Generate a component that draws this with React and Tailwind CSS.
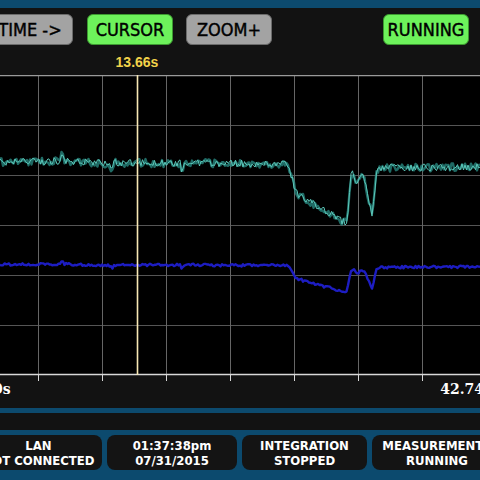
import { useMemo } from "react";

const W = 480;
const H = 300;
const GRID_X = [38, 102, 166, 230, 294, 358, 422];
const GRID_Y = [50, 100, 150, 200, 250];
const CURSOR_X = 137;

// cyan trace shape, in page coordinates (y from top of page)
const KEYS = [
  [0, 162], [60, 161], [62, 154], [64, 161], [110, 164], [112, 171], [114, 163],
  [180, 163], [182, 171], [184, 163], [288, 164], [292, 178], [296, 193],
  [320, 208], [344, 222], [347, 222], [351, 176], [353, 172], [357, 184],
  [361, 172], [364, 176], [372, 216], [377, 170], [380, 168], [480, 167],
];

const rng = (seed) => () => {
  seed |= 0;
  seed = (seed + 0x6d2b79f5) | 0;
  let t = Math.imul(seed ^ (seed >>> 15), 1 | seed);
  t = (t + Math.imul(t ^ (t >>> 7), 61 | t)) ^ t;
  return ((t ^ (t >>> 14)) >>> 0) / 4294967296;
};

const shape = (x) => {
  for (let i = 1; i < KEYS.length; i++) {
    const [x1, y1] = KEYS[i];
    const [x0, y0] = KEYS[i - 1];
    if (x <= x1) return y0 + ((x - x0) / (x1 - x0)) * (y1 - y0);
  }
  return 167;
};

const buildPath = (seed, amp, map) => {
  const r = rng(seed);
  let d = "";
  for (let x = 0; x <= W; x += 1.5) {
    const y = map(shape(x)) + (r() - 0.5) * amp - 75;
    d += `${d ? "L" : "M"}${x.toFixed(1)} ${y.toFixed(1)}`;
  }
  return d;
};

const TopButton = ({ label, on }) => (
  <div
    className={`w-[86px] h-[31px] shrink-0 rounded-[6px] border-[1.5px] flex items-center justify-center text-[18px] text-black leading-none [-webkit-text-stroke:0.4px_black] ${
      on ? "bg-[#6df25b] border-[#3c9a30]" : "bg-[#a3a3a3] border-[#6b6b6b]"
    }`}
  >
    {label}
  </div>
);

const StatusBox = ({ w, top, bottom, className = "" }) => (
  <div
    className={`h-[35px] shrink-0 rounded-[8px] bg-[#141414] flex flex-col items-center justify-center text-white font-bold text-[13px] leading-[15px] whitespace-nowrap ${w} ${className}`}
  >
    <span>{top}</span>
    <span>{bottom}</span>
  </div>
);

export default function App() {
  const traces = useMemo(
    () => ({
      cyanA: buildPath(7, 8, (y) => y),
      cyanB: buildPath(19, 7, (y) => y),
      blue: buildPath(31, 2.5, (y) => 265 + (y - 163) * 0.45),
    }),
    []
  );

  return (
    <div
      className="w-[480px] h-[480px] overflow-hidden bg-[#121212] flex flex-col"
      style={{ fontFamily: '"DejaVu Sans Condensed", "DejaVu Sans", sans-serif' }}
    >
      {/* top strip */}
      <div className="h-[8px] bg-[#0c4a6e] shrink-0" />

      {/* button header */}
      <div className="relative h-[67px] shrink-0">
        <div className="flex items-center pt-[6px] ml-[-13px]">
          <TopButton label="TIME ->" />
          <div className="w-[14px]" />
          <TopButton label="CURSOR" on />
          <div className="w-[13px]" />
          <TopButton label="ZOOM+" />
          <div className="flex-1" />
          <TopButton label="RUNNING" on />
          <div className="w-[11px] shrink-0" />
        </div>
        <div
          className="absolute top-[47px] -translate-x-1/2 text-[14px] leading-none font-bold text-[#f2d24a]"
          style={{ left: CURSOR_X, fontFamily: '"Liberation Sans", sans-serif' }}
        >
          13.66s
        </div>
      </div>

      {/* chart */}
      <svg width={W} height={306} className="block shrink-0" viewBox={`0 0 ${W} 306`}>
        <rect x="0" y="0" width={W} height={H} fill="#000" />
        <rect x="0" y={H} width={W} height={6} fill="#121212" />
        {GRID_Y.map((y) => (
          <line key={y} x1="0" x2={W} y1={y + 0.5} y2={y + 0.5} stroke="#555" strokeWidth="1" />
        ))}
        {GRID_X.map((x) => (
          <line key={x} x1={x + 0.5} x2={x + 0.5} y1="0" y2={H + 6} stroke="#666" strokeWidth="1" />
        ))}
        {GRID_X.map((x) => (
          <line key={`t${x}`} x1={x + 0.5} x2={x + 0.5} y1={H} y2={H + 6} stroke="#d8d8d8" strokeWidth="1" />
        ))}
        <line x1="0" x2={W} y1="0.5" y2="0.5" stroke="#9a9a9a" strokeWidth="1.5" />
        <line x1="0" x2={W} y1={H - 0.5} y2={H - 0.5} stroke="#d8d8d8" strokeWidth="1.5" />

        <path d={traces.blue} fill="none" stroke="#1d1dc2" strokeWidth="2.4" strokeLinejoin="round" />
        <path d={traces.cyanA} fill="none" stroke="#2a8e86" strokeWidth="2.4" strokeOpacity="0.75" strokeLinejoin="round" />
        <path d={traces.cyanB} fill="none" stroke="#5cc8ba" strokeWidth="1" strokeLinejoin="round" />

        <line x1={CURSOR_X + 0.5} x2={CURSOR_X + 0.5} y1="0" y2={H} stroke="#f7e7b4" strokeWidth="1.6" />
      </svg>

      {/* axis labels */}
      <div
        className="h-[27px] shrink-0 flex items-start text-white font-bold text-[14px] leading-none pt-[1px]"
        style={{ fontFamily: '"DejaVu Serif", serif' }}
      >
        <span className="ml-[-7px]">0s</span>
        <div className="flex-1" />
        <span className="mr-[-12px]">42.74s</span>
      </div>

      <div className="h-[5px] bg-[#0c4a6e] shrink-0" />
      <div className="h-[17px] bg-[#121212] shrink-0" />

      {/* status row */}
      <div className="flex-1 bg-[#0c4a6e] flex items-start pt-[5px] gap-[5px]">
        <StatusBox w="w-[127px]" className="ml-[-25px]" top="LAN" bottom="NOT CONNECTED" />
        <StatusBox w="w-[130px]" top="01:37:38pm" bottom="07/31/2015" />
        <StatusBox w="w-[125px]" top="INTEGRATION" bottom="STOPPED" />
        <StatusBox w="w-[130px]" top="MEASUREMENTS" bottom="RUNNING" />
      </div>
    </div>
  );
}
